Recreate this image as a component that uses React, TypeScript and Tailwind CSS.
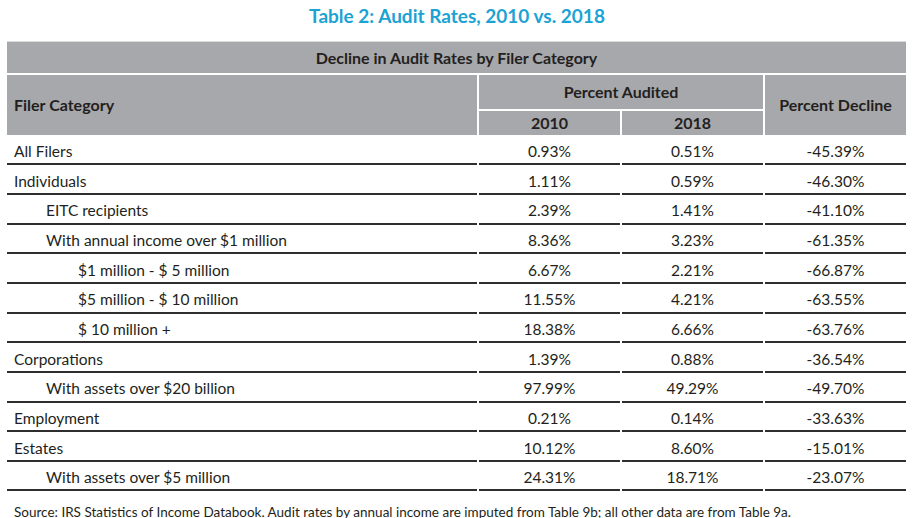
import React from "react";

type Row = { label: string; level: number; a: string; b: string; c: string };

const rows: Row[] = [
  { label: "All Filers", level: 0, a: "0.93%", b: "0.51%", c: "-45.39%" },
  { label: "Individuals", level: 0, a: "1.11%", b: "0.59%", c: "-46.30%" },
  { label: "EITC recipients", level: 1, a: "2.39%", b: "1.41%", c: "-41.10%" },
  { label: "With annual income over $1 million", level: 1, a: "8.36%", b: "3.23%", c: "-61.35%" },
  { label: "$1 million - $ 5 million", level: 2, a: "6.67%", b: "2.21%", c: "-66.87%" },
  { label: "$5 million - $ 10 million", level: 2, a: "11.55%", b: "4.21%", c: "-63.55%" },
  { label: "$ 10 million +", level: 2, a: "18.38%", b: "6.66%", c: "-63.76%" },
  { label: "Corporations", level: 0, a: "1.39%", b: "0.88%", c: "-36.54%" },
  { label: "With assets over $20 billion", level: 1, a: "97.99%", b: "49.29%", c: "-49.70%" },
  { label: "Employment", level: 0, a: "0.21%", b: "0.14%", c: "-33.63%" },
  { label: "Estates", level: 0, a: "10.12%", b: "8.60%", c: "-15.01%" },
  { label: "With assets over $5 million", level: 1, a: "24.31%", b: "18.71%", c: "-23.07%" },
];

const indent = ["pl-[7px]", "pl-[39px]", "pl-[71px]"];

export default function App() {
  return (
    <div
      className="w-[914px] h-[518px] overflow-hidden bg-white text-[#231f20]"
      style={{ fontFamily: "Lato, 'Noto Sans', sans-serif" }}
    >
      <div className="pt-[4px] h-[41px] text-center text-[19px] leading-[24px] font-bold text-[#1ca3d3]">
        Table 2: Audit Rates, 2010 vs. 2018
      </div>
      <div className="ml-[7px] w-[899px] border-t border-[#dcdcde]">
        <div className="grid grid-cols-[470px_141px_141px_141px] grid-rows-[31px_34px_24px] gap-[2px] text-[16px] font-bold">
          <div className="col-span-4 bg-[#a7a8ab] flex items-center justify-center pt-[1px]">
            Decline in Audit Rates by Filer Category
          </div>
          <div className="row-span-2 bg-[#a7a8ab] flex items-center pl-[7px]">Filer Category</div>
          <div className="col-span-2 bg-[#a7a8ab] flex items-center justify-center">Percent Audited</div>
          <div className="row-span-2 bg-[#a7a8ab] flex items-center justify-center">Percent Decline</div>
          <div className="bg-[#a7a8ab] flex items-center justify-center">2010</div>
          <div className="bg-[#a7a8ab] flex items-center justify-center">2018</div>
        </div>
        <div className="flex flex-col text-[15.5px]">
          {rows.map((r) => (
            <div key={r.label} className="grid grid-cols-[470px_141px_141px_141px] gap-x-[2px] h-[29.67px]">
              <div className={`border-b-2 border-[#2e2e2e] flex items-center pt-[5px] ${indent[r.level]}`}>
                {r.label}
              </div>
              <div className="border-b-2 border-[#2e2e2e] flex items-center justify-center pt-[5px]">{r.a}</div>
              <div className="border-b-2 border-[#2e2e2e] flex items-center justify-center pt-[5px]">{r.b}</div>
              <div className="border-b-2 border-[#2e2e2e] flex items-center justify-center pt-[5px]">{r.c}</div>
            </div>
          ))}
        </div>
      </div>
      <div className="mt-[12px] pl-[14px] text-[13.5px] leading-[18px] whitespace-nowrap">
        Source: IRS Statistics of Income Databook. Audit rates by annual income are imputed from Table 9b; all other data are from Table 9a.
      </div>
    </div>
  );
}
